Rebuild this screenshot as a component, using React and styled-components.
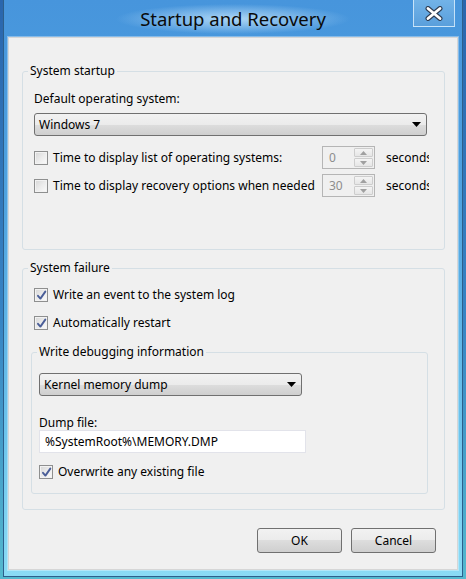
import React from 'react';
import styled, { createGlobalStyle } from 'styled-components';

const Global = createGlobalStyle`
  html, body { margin: 0; padding: 0; }
  body {
    width: 466px; height: 579px; overflow: hidden;
    background: linear-gradient(180deg, #2a66ad 0%, #3784c4 55%, #54b9cf 100%);
    font-family: "Noto Sans", "Segoe UI", sans-serif;
    font-size: 12px; color: #000;
  }
`;

const Window = styled.div`
  margin-left: 3px;
  width: 460px; height: 577px; box-sizing: border-box;
  border: 1px solid #2d5f8c; border-top: none;
  background: linear-gradient(180deg, #4795dc 0%, #4fa3e0 35%, #6cc4ec 75%, #8adbf5 100%);
  padding: 0 4px 5px;
  display: flex; flex-direction: column;
`;

const TitleBar = styled.div`
  height: 37px; flex: none;
  display: grid; grid-template-columns: 1fr auto 1fr; align-items: start;
`;

const Title = styled.div`
  grid-column: 2;
  margin-top: 4px;
  padding: 2px 24px;
  font-family: "Noto Sans", "Segoe UI", sans-serif;
  font-size: 18.5px; line-height: 26px; color: #0a0a0a;
  background: radial-gradient(closest-side, rgba(190,225,250,0.85) 0%, rgba(160,205,242,0.55) 55%, rgba(120,185,235,0) 100%);
`;

const CloseBtn = styled.div`
  grid-column: 3; justify-self: end;
  margin-right: 3px;
  width: 42px; height: 27px; box-sizing: border-box;
  border: 1px solid rgba(230,244,255,0.75); border-top: none;
  background: linear-gradient(180deg, #72b3e8 0%, #5a9fdc 100%);
  display: flex; align-items: center; justify-content: center;
`;

const Panel = styled.div`
  height: 533px; box-sizing: border-box; flex: none;
  background: #f0f0f0;
  border: 1px solid #d6d6d6;
  box-shadow: 0 0 0 1px rgba(255,255,255,0.35);
  padding: 25px 12px 0 13px;
  display: flex; flex-direction: column;
`;

const Group = styled.fieldset`
  margin: ${p => p.$mt || 0}px 0 0 0;
  min-width: 0;
  border: 1px solid #d5dfe5;
  border-radius: 3px;
  padding: ${p => p.$pad};
  display: flex; flex-direction: column;
`;

const Legend = styled.legend`
  padding: 0 2px;
  margin-left: ${p => p.$offset}px;
  line-height: 16px;
`;

const Label = styled.div`
  line-height: ${p => p.$lh || 16}px;
  margin-top: ${p => p.$mt || 0}px;
  white-space: nowrap;
`;

const Select = styled.div`
  margin-top: ${p => p.$mt || 0}px;
  width: ${p => p.$w ? p.$w + 'px' : 'auto'};
  height: 23px; box-sizing: border-box;
  border: 1px solid #707070; border-radius: 3px;
  background: linear-gradient(180deg, #f2f2f2 0%, #ebebeb 50%, #dddddd 50%, #cfcfcf 100%);
  display: flex; align-items: center; justify-content: space-between;
  padding: 0 5px 0 4px;
`;

const Row = styled.div`
  display: flex; align-items: center;
  margin-top: ${p => p.$mt || 0}px;
  margin-left: ${p => p.$ml || 0}px;
  height: ${p => p.$h || 16}px;
`;

const Box = styled.span`
  width: 14px; height: 14px; box-sizing: border-box; flex: none;
  border: 1px solid #8e8f8f;
  background: linear-gradient(135deg, #d6d6d6 0%, #ebebeb 50%, #fbfbfb 100%);
  box-shadow: inset 0 0 0 1px #f2f2f2;
  margin-right: 5px;
  display: flex; align-items: center; justify-content: center;
`;

const RowText = styled.span`
  white-space: nowrap;
  width: ${p => p.$w ? p.$w + 'px' : 'auto'};
  flex: none;
  line-height: 16px;
`;

const Spin = styled.div`
  width: 53px; height: 23px; box-sizing: border-box; flex: none;
  border: 1px solid #b5b5b5;
  background: #f0f0f0;
  display: flex; align-items: stretch;
  padding: 1px;
`;

const SpinValue = styled.span`
  flex: 1; color: #8d8d8d; padding-left: 5px; line-height: 19px;
`;

const SpinBtns = styled.div`
  width: 19px; display: flex; flex-direction: column; gap: 1px;
`;

const SpinBtn = styled.div`
  flex: 1; border: 1px solid #cdcdcd; border-radius: 1px;
  background: linear-gradient(180deg, #f4f4f4, #e6e6e6);
  display: flex; align-items: center; justify-content: center;
`;

const Seconds = styled.span`
  width: 43px; overflow: hidden; white-space: nowrap; flex: none;
  margin-left: 11px; line-height: 16px;
`;

const TextBox = styled.div`
  width: 267px; height: 23px; box-sizing: border-box;
  background: #fff; border: 1px solid #e2e3ea;
  padding-left: 5px; line-height: 21px;
`;

const Buttons = styled.div`
  display: flex; justify-content: flex-end; gap: 9px;
  margin-top: 18px; padding-right: 9px;
`;

const Button = styled.div`
  width: 85px; height: 25px; box-sizing: border-box;
  border: 1px solid #707070; border-radius: 3px;
  background: linear-gradient(180deg, #f2f2f2 0%, #ebebeb 50%, #dddddd 50%, #cfcfcf 100%);
  display: flex; align-items: center; justify-content: center;
`;

const Check = ({ checked }) => (
  <Box>
    {checked && (
      <svg width="11" height="11" viewBox="0 0 11 11">
        <path d="M2 5.8 L4.4 8.6 L9.3 1.6" fill="none" stroke="#4a5e98" strokeWidth="1.9" strokeLinecap="round" strokeLinejoin="round" />
      </svg>
    )}
  </Box>
);

const Arrow = () => (
  <svg width="9" height="5" viewBox="0 0 9 5"><path d="M0 0 H9 L4.5 5 Z" fill="#000" /></svg>
);

const Tri = ({ up }) => (
  <svg width="7" height="4" viewBox="0 0 7 4">
    <path d={up ? 'M0 4 H7 L3.5 0 Z' : 'M0 0 H7 L3.5 4 Z'} fill="#a0a0a0" />
  </svg>
);

const SpinBox = ({ value }) => (
  <Spin>
    <SpinValue>{value}</SpinValue>
    <SpinBtns>
      <SpinBtn><Tri up /></SpinBtn>
      <SpinBtn><Tri /></SpinBtn>
    </SpinBtns>
  </Spin>
);

export default function App() {
  return (
    <>
      <Global />
      <Window>
        <TitleBar>
          <Title>Startup and Recovery</Title>
          <CloseBtn>
            <svg width="18" height="15" viewBox="0 0 18 15">
              <path d="M3 2.5 L15 12.5 M15 2.5 L3 12.5" stroke="#2f3d52" strokeWidth="5" strokeLinecap="round" />
              <path d="M3 2.5 L15 12.5 M15 2.5 L3 12.5" stroke="#fff" strokeWidth="2.8" strokeLinecap="round" />
            </svg>
          </CloseBtn>
        </TitleBar>
        <Panel>
          <Group $pad="12px 17px 52px 11px">
            <Legend $offset={-6}>System startup</Legend>
            <Label>Default operating system:</Label>
            <Select $mt={6}>
              <span>Windows 7</span>
              <Arrow />
            </Select>
            <Row $mt={10} $h={23}>
              <Check />
              <RowText $w={269}>Time to display list of operating systems:</RowText>
              <SpinBox value="0" />
              <Seconds>seconds</Seconds>
            </Row>
            <Row $mt={5} $h={23}>
              <Check />
              <RowText $w={269}>Time to display recovery options when needed</RowText>
              <SpinBox value="30" />
              <Seconds>seconds</Seconds>
            </Row>
          </Group>
          <Group $mt={10} $pad="11px 16px 15px 8px">
            <Legend $offset={-3}>System failure</Legend>
            <Row $ml={3}>
              <Check checked />
              <RowText>Write an event to the system log</RowText>
            </Row>
            <Row $ml={3} $mt={12}>
              <Check checked />
              <RowText>Automatically restart</RowText>
            </Row>
            <Group $mt={13} $pad="13px 8px 13px 7px">
              <Legend $offset={-2}>Write debugging information</Legend>
              <Select $w={263}>
                <span>Kernel memory dump</span>
                <Arrow />
              </Select>
              <Label $mt={19} $lh={15}>Dump file:</Label>
              <TextBox>%SystemRoot%\MEMORY.DMP</TextBox>
              <Row $mt={11}>
                <Check checked />
                <RowText>Overwrite any existing file</RowText>
              </Row>
            </Group>
          </Group>
          <Buttons>
            <Button>OK</Button>
            <Button>Cancel</Button>
          </Buttons>
        </Panel>
      </Window>
    </>
  );
}
